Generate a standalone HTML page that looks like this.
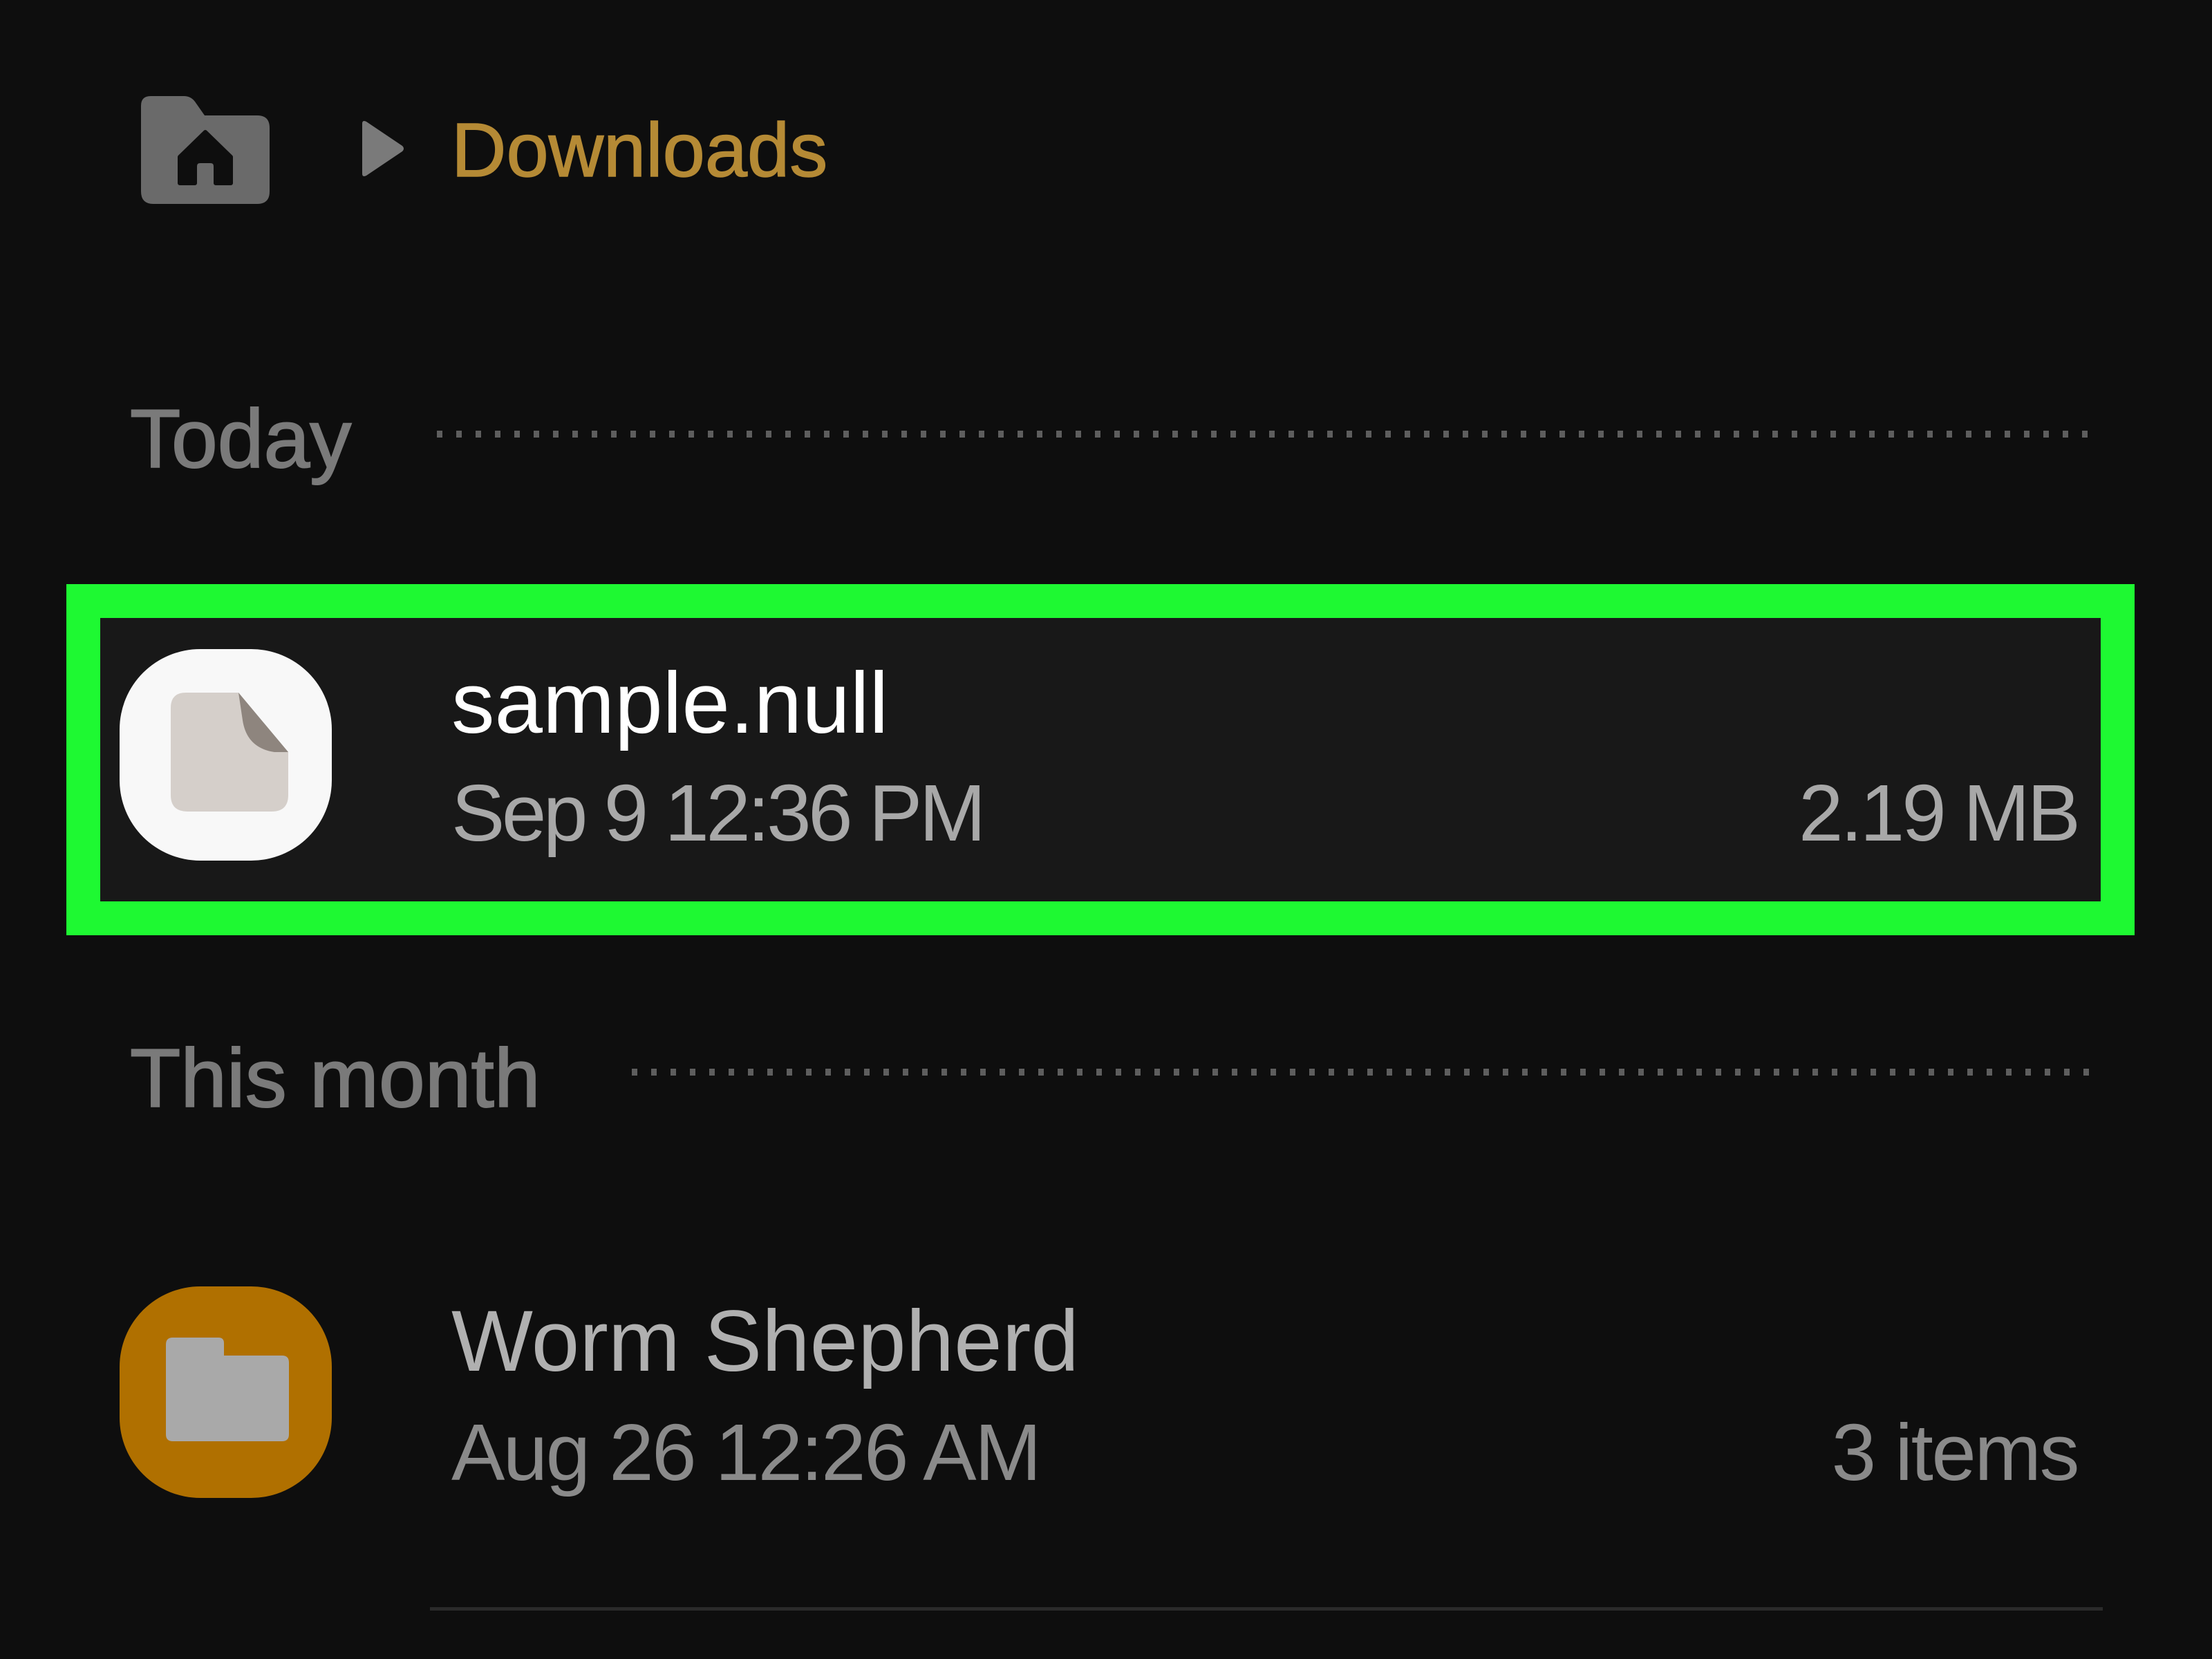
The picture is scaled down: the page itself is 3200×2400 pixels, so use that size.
<!DOCTYPE html>
<html><head><meta charset="utf-8"><style>
html,body{margin:0;padding:0;}
body{width:3200px;height:2400px;background:#0e0e0e;position:relative;overflow:hidden;font-family:"Liberation Sans",sans-serif;}
.t{position:absolute;line-height:1;white-space:nowrap;}
.dots{position:absolute;height:10px;background-image:linear-gradient(90deg,#5e5e5e 0 8px,transparent 8px);background-size:28px 10px;background-repeat:repeat-x;}
</style></head><body>
<svg style="position:absolute;left:204px;top:139px" width="186" height="156" viewBox="0 0 186 156">
<path d="M14 0 H62 Q72 0 78 8 L92 28 H168 Q186 28 186 46 V138 Q186 156 168 156 H18 Q0 156 0 138 V14 Q0 0 14 0 Z" fill="#6a6a6a"/>
<path d="M93 52 L130 88 V126 H108 V102 Q108 94 100 94 H86 Q78 94 78 102 V126 H56 V88 Z" fill="#0e0e0e" stroke="#0e0e0e" stroke-width="6" stroke-linejoin="round"/>
</svg>
<svg style="position:absolute;left:520px;top:173px" width="68" height="84" viewBox="0 0 68 84"><path d="M4 6 Q4 0 10 3 L62 38 Q66 42 62 46 L10 81 Q4 84 4 78 Z" fill="#7a7a7a"/></svg>
<div class="t" style="left:653px;top:163px;font-size:110px;color:#b58a35;-webkit-text-stroke:1.5px #b58a35;">Downloads</div>

<div class="t" style="left:188px;top:575px;font-size:120px;color:#7a7a7a;-webkit-text-stroke:2px #7a7a7a;">Today</div>
<div class="dots" style="left:632px;top:623px;width:2400px;"></div>

<div style="position:absolute;left:96px;top:845px;width:2894px;height:410px;border:49px solid #1ef932;background:#181818;"></div>
<div style="position:absolute;left:173px;top:939px;width:307px;height:306px;background:#f8f8f8;border-radius:38%;"></div>
<svg style="position:absolute;left:247px;top:1002px" width="170" height="172" viewBox="0 0 170 172">
<path d="M22 0 H98 L170 86 V148 Q170 172 146 172 H24 Q0 172 0 148 V22 Q0 0 22 0 Z" fill="#d5cfca"/>
<path d="M98 0 L170 86 H150 Q110 80 104 40 Z" fill="#8e857e"/>
</svg>
<div class="t" style="left:653px;top:955px;font-size:125px;color:#ffffff;">sample.null</div>
<div class="t" style="left:653px;top:1118px;font-size:116px;color:#a8a8a8;letter-spacing:-4.5px;">Sep 9 12:36 PM</div>
<div class="t" style="right:194px;top:1118px;font-size:116px;color:#a8a8a8;letter-spacing:-4px;">2.19 MB</div>

<div class="t" style="left:188px;top:1500px;font-size:120px;color:#7a7a7a;-webkit-text-stroke:2px #7a7a7a;">This month</div>
<div class="dots" style="left:914px;top:1546px;width:2120px;"></div>

<div style="position:absolute;left:173px;top:1861px;width:307px;height:306px;background:#b07000;border-radius:38%;"></div>
<svg style="position:absolute;left:240px;top:1935px" width="178" height="150" viewBox="0 0 178 150">
<path d="M10 0 H76 Q84 0 84 8 V26 H168 Q178 26 178 36 V140 Q178 150 168 150 H10 Q0 150 0 140 V10 Q0 0 10 0 Z" fill="#a9a9a9"/>
</svg>
<div class="t" style="left:653px;top:1878px;font-size:125px;color:#b0b0b0;">Worm Shepherd</div>
<div class="t" style="left:653px;top:2043px;font-size:116px;color:#8a8a8a;letter-spacing:-2.6px;">Aug 26 12:26 AM</div>
<div class="t" style="right:194px;top:2043px;font-size:116px;color:#8a8a8a;letter-spacing:-2.5px;">3 items</div>

<div style="position:absolute;left:622px;top:2325px;width:2420px;height:5px;background:#2a2a2a;"></div>
</body></html>
